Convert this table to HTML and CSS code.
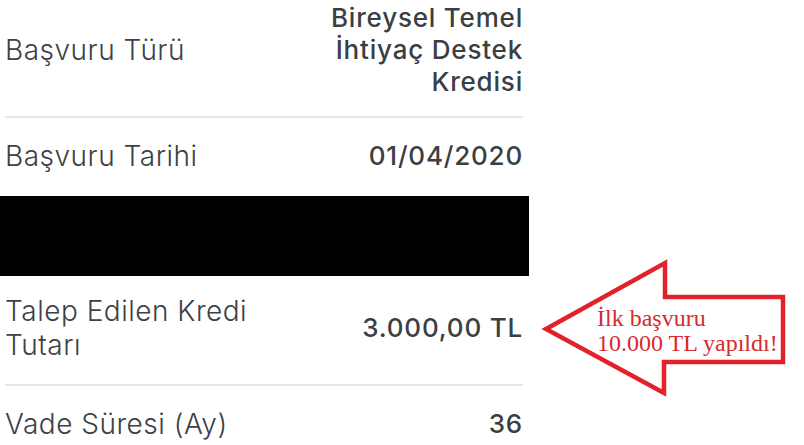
FILE: index.html
```html
<!DOCTYPE html>
<html lang="tr">
<head>
<meta charset="utf-8">
<title>Başvuru Detayı</title>
<link rel="stylesheet" href="styles.css">
</head>
<body>
<div class="page">
  <div class="sheet">
    <div class="row row-first">
      <div class="label">Başvuru Türü</div>
      <div class="value">Bireysel Temel<br>İhtiyaç Destek<br>Kredisi</div>
    </div>
    <div class="row row-date">
      <div class="label">Başvuru Tarihi</div>
      <div class="value">01/04/2020</div>
    </div>
    <div class="redacted"></div>
    <div class="row row-amount">
      <div class="label label-wrap">Talep Edilen Kredi Tutarı</div>
      <div class="value">3.000,00 TL</div>
    </div>
    <div class="row row-last">
      <div class="label">Vade Süresi (Ay)</div>
      <div class="value">36</div>
    </div>
  </div>

  <svg class="arrow" width="804" height="445" viewBox="0 0 804 445" aria-hidden="true">
    <polygon points="546,329 665,263 665,297 783,297 783,362 664,362 664,393" fill="#ffffff" stroke="#e3212b" stroke-width="4.5" stroke-linejoin="miter"/>
  </svg>
  <div class="note">İlk başvuru<br>10.000 TL yapıldı!</div>
</div>
</body>
</html>
```

FILE: styles.css
```css
html, body {
  margin: 0;
  padding: 0;
  background: #ffffff;
}

.page {
  position: relative;
  width: 804px;
  height: 445px;
  overflow: hidden;
}

.sheet {
  width: 529px;
  display: flex;
  flex-direction: column;
}

.row {
  display: flex;
  justify-content: space-between;
  align-items: center;
  margin: 0 6px 0 5px;
  border-bottom: 2px solid #e6e6e6;
}

.label {
  font-family: Inter, "Liberation Sans", sans-serif;
  font-weight: 300;
  font-size: 28px;
  line-height: 32px;
  color: #3c4146;
  letter-spacing: 0.5px;
}

.label-wrap {
  max-width: 275px;
  line-height: 34px;
}

.value {
  font-family: Inter, "Liberation Sans", sans-serif;
  font-weight: 500;
  font-size: 26px;
  line-height: 32px;
  color: #3a3f44;
  text-align: right;
  letter-spacing: 0.8px;
}

.row-first {
  padding: 2px 0 18px;
}

.row-date {
  padding: 22px 0 24px;
  border-bottom: none;
}

.redacted {
  height: 80px;
  background: #000000;
}

.row-amount {
  padding: 18px 0 22px;
}

.row-last {
  padding: 22px 0 18px;
  border-bottom: none;
}

.arrow {
  position: absolute;
  left: 0;
  top: 0;
  pointer-events: none;
}

.note {
  position: absolute;
  left: 597px;
  top: 306px;
  font-family: "Liberation Serif", "Times New Roman", serif;
  font-size: 24px;
  line-height: 25px;
  color: #d52a30;
  white-space: nowrap;
}
```
